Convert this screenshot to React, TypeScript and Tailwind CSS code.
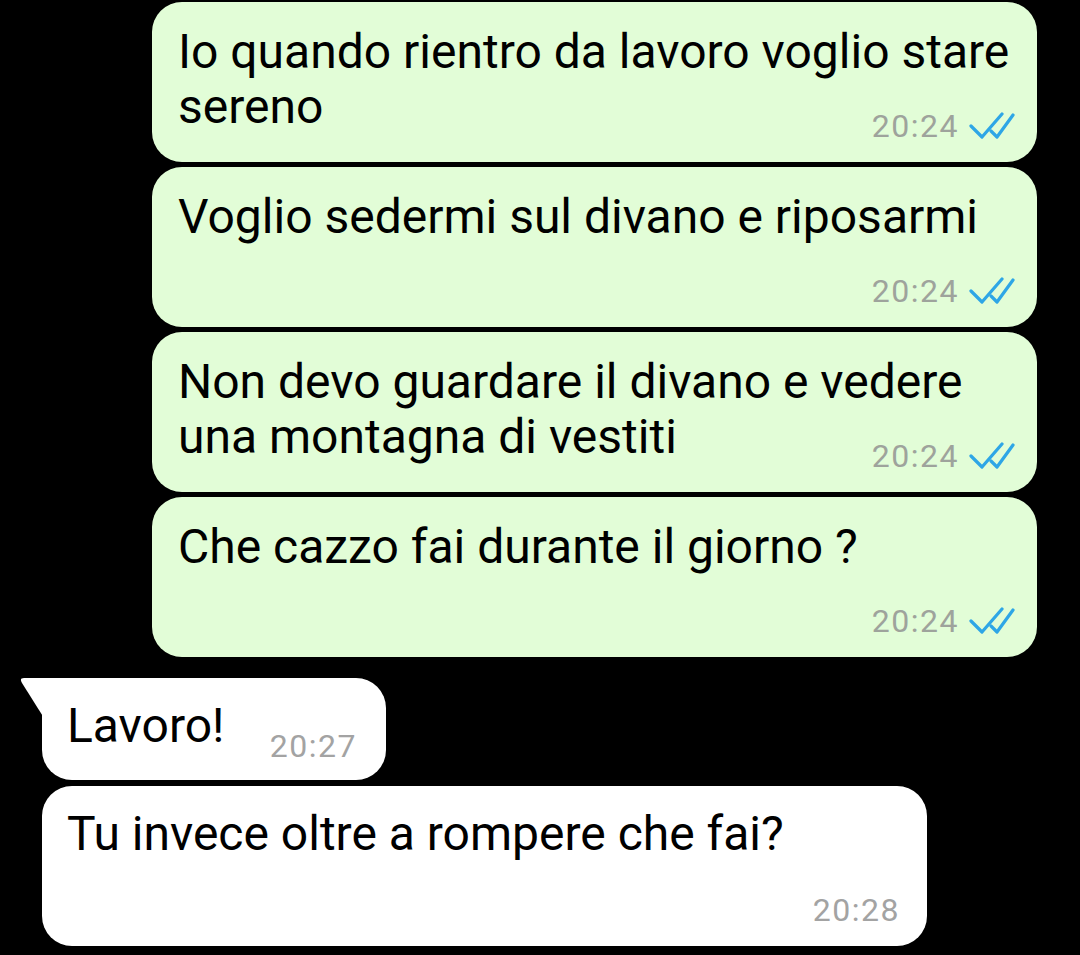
import React from "react";

const Ticks = () => (
  <svg width="46" height="28" viewBox="0 0 46 28" className="ml-[10px] shrink-0">
    <path d="M2 14 L13 25 L33 2" fill="none" stroke="#2ea6e6" strokeWidth="3.2" strokeLinecap="round" strokeLinejoin="round" />
    <path d="M22 19 L28 25 L44 3" fill="none" stroke="#2ea6e6" strokeWidth="3.2" strokeLinecap="round" strokeLinejoin="round" />
  </svg>
);

const GreenBubble = ({ text }: { text: string }) => (
  <div className="flex h-[160px] w-[885px] flex-col rounded-[30px] bg-[#e2fdd7] pl-[26px] pr-[22px] pt-[22px]">
    <div className="h-[110px] text-[48px] leading-[55px] text-black">{text}</div>
    <div className="mt-[-26px] flex items-center justify-end">
      <span className="text-[32px] leading-[36px] tracking-[1.5px] text-[#9ea39c]">20:24</span>
      <Ticks />
    </div>
  </div>
);

export default function App() {
  return (
    <div
      className="h-[955px] w-[1080px] overflow-hidden bg-black"
      style={{ fontFamily: "Roboto, 'Noto Sans', sans-serif" }}
    >
      <div className="flex flex-col gap-[5px] pl-[152px] pt-[2px]">
        <GreenBubble text="Io quando rientro da lavoro voglio stare sereno" />
        <GreenBubble text="Voglio sedermi sul divano e riposarmi" />
        <GreenBubble text="Non devo guardare il divano e vedere una montagna di vestiti" />
        <GreenBubble text="Che cazzo fai durante il giorno ?" />
      </div>

      <div className="mt-[21px] flex flex-col gap-[6px] pl-[42px]">
        <div className="relative flex h-[102px] w-[344px] items-start rounded-[30px] rounded-tl-none bg-white pl-[25px] pr-[29px] pt-[20px]">
          <svg width="24" height="40" viewBox="0 0 24 40" className="absolute left-[-22px] top-0">
            <path d="M24 0 H4 Q-1 0 2 5 L24 40 Z" fill="#ffffff" />
          </svg>
          <span className="text-[48px] leading-[55px] text-black">Lavoro!</span>
          <span className="ml-auto mt-[30px] text-[32px] leading-[36px] tracking-[1.5px] text-[#a3a3a3]">20:27</span>
        </div>
        <div className="flex h-[160px] w-[885px] flex-col rounded-[30px] bg-white pl-[25px] pr-[27px] pt-[20px]">
          <div className="h-[110px] text-[48px] leading-[55px] text-black">Tu invece oltre a rompere che fai?</div>
          <div className="mt-[-24px] flex justify-end">
            <span className="text-[32px] leading-[36px] tracking-[1.5px] text-[#a3a3a3]">20:28</span>
          </div>
        </div>
      </div>
    </div>
  );
}
